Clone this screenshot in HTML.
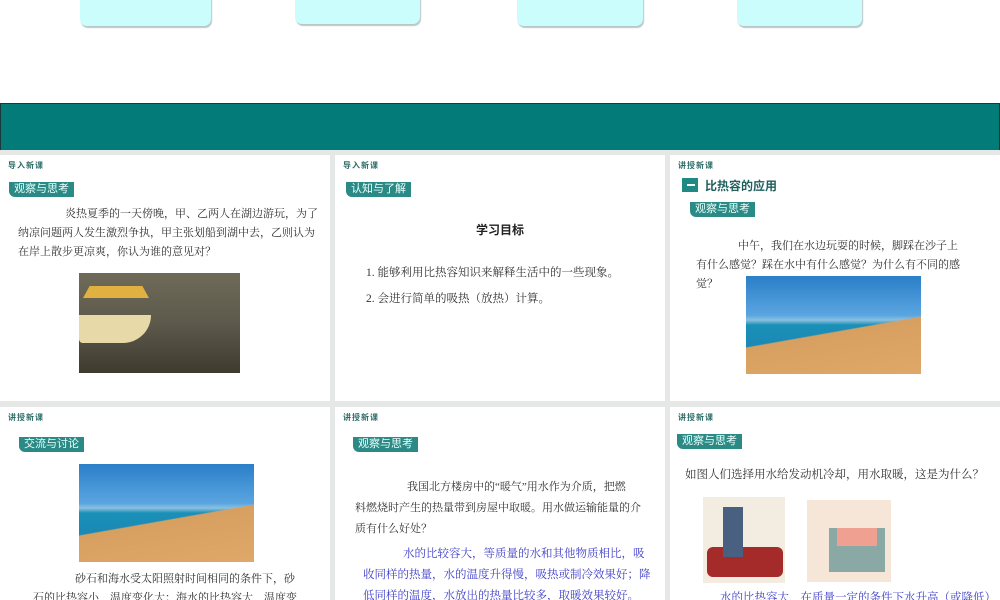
<!DOCTYPE html>
<html><head><meta charset="utf-8"><style>
*{margin:0;padding:0;box-sizing:border-box}
body{width:1000px;height:600px;overflow:hidden;background:#fff;position:relative;font-family:"Liberation Serif","Noto Serif CJK SC",serif;color:#333}
.a{position:absolute}
.card{position:absolute;top:-8px;height:34px;background:#ccfdfd;border-radius:0 0 7px 7px;box-shadow:1px 2px 1px #b8c8c8}
.grey{position:absolute;left:0;top:150px;width:1000px;height:450px;background:#e6e8e8}
.p{position:absolute;background:#fff;overflow:hidden}
.hd{position:absolute;left:8px;top:5px;font:bold 8px "Liberation Sans","Noto Sans CJK SC",sans-serif;color:#2a6b66;letter-spacing:1px}
.tag{position:absolute;height:15px;padding:0 5px;background:#2b8a85;color:#e8fffd;font:11px "Liberation Sans","Noto Sans CJK SC",sans-serif;line-height:15px;border-radius:0 0 0 6px}
.t{position:absolute;font-size:11px;line-height:19px;color:#333;white-space:nowrap}
.img{position:absolute}
.blue{color:#4040c8}
.sea{background:linear-gradient(170deg,transparent 55%,#d8a060 56%,#e0a868) ,linear-gradient(#2a7fc8,#5aa5e0 40%,#8ac0e0 45%,#1a90b8 50%,#1a7fb0)}
</style></head><body>
<div class="card" style="left:80px;width:131px"></div>
<div class="card" style="left:295px;width:125px;height:32px"></div>
<div class="card" style="left:517px;width:126px"></div>
<div class="card" style="left:737px;width:125px"></div>
<div class="a" style="left:0;top:103px;width:1000px;height:48px;background:#037c79;border:1px solid #1a3a3a"></div>
<div class="grey"></div>

<div class="p" style="left:0;top:155px;width:330px;height:246px">
<div class="hd">导入新课</div>
<div class="tag" style="left:9px;top:27px">观察与思考</div>
<div class="t" style="left:18px;top:50px;width:300px;text-indent:47px">炎热夏季的一天傍晚，甲、乙两人在湖边游玩，为了<br>纳凉问题两人发生激烈争执，甲主张划船到湖中去，乙则认为<br>在岸上散步更凉爽，你认为谁的意见对？</div>
<div class="img" style="left:79px;top:118px;width:161px;height:100px;background:linear-gradient(#6f6a58,#5d5a4c 50%,#3e3a2e)">
<div class="a" style="left:4px;top:13px;width:66px;height:12px;background:#e0b040;clip-path:polygon(10% 0,90% 0,100% 100%,0 100%)"></div>
<div class="a" style="left:0;top:42px;width:72px;height:28px;background:#e8d9a8;border-radius:0 0 30px 4px"></div>
</div>
</div>

<div class="p" style="left:335px;top:155px;width:330px;height:246px">
<div class="hd">导入新课</div>
<div class="tag" style="left:11px;top:27px">认知与了解</div>
<div class="a" style="left:0;top:66px;width:330px;text-align:center;font:bold 12px 'Liberation Sans','Noto Sans CJK SC',sans-serif;color:#222">学习目标</div>
<div class="t" style="left:31px;top:109px;font-size:11.5px">1. 能够利用比热容知识来解释生活中的一些现象。</div>
<div class="t" style="left:31px;top:135px;font-size:11.5px">2. 会进行简单的吸热（放热）计算。</div>
</div>

<div class="p" style="left:670px;top:155px;width:330px;height:246px">
<div class="hd">讲授新课</div>
<div class="a" style="left:12px;top:23px;width:16px;height:14px;background:#1f8a84"></div>
<div class="a" style="left:17px;top:29px;width:8px;height:2px;background:#fff"></div>
<div class="a" style="left:35px;top:22px;font:bold 12px 'Liberation Sans','Noto Sans CJK SC',sans-serif;color:#1f5f5c">比热容的应用</div>
<div class="tag" style="left:20px;top:47px">观察与思考</div>
<div class="t" style="left:26px;top:82px;text-indent:42px">中午，我们在水边玩耍的时候，脚踩在沙子上<br>有什么感觉？踩在水中有什么感觉？为什么有不同的感<br>觉？</div>
<div class="img sea" style="left:76px;top:121px;width:175px;height:98px"></div>
</div>

<div class="p" style="left:0;top:407px;width:330px;height:193px">
<div class="hd">讲授新课</div>
<div class="tag" style="left:19px;top:30px">交流与讨论</div>
<div class="img sea" style="left:79px;top:57px;width:175px;height:98px"></div>
<div class="t" style="left:33px;top:163px;text-indent:42px">砂石和海水受太阳照射时间相同的条件下，砂<br>石的比热容小，温度变化大；海水的比热容大，温度变</div>
</div>

<div class="p" style="left:335px;top:407px;width:330px;height:193px">
<div class="hd">讲授新课</div>
<div class="tag" style="left:18px;top:30px">观察与思考</div>
<div class="t" style="left:20px;top:70px;text-indent:52px;line-height:21px">我国北方楼房中的“暖气”用水作为介质，把燃<br>料燃烧时产生的热量带到房屋中取暖。用水做运输能量的介<br>质有什么好处？</div>
<div class="t blue" style="left:28px;top:137px;text-indent:40px;line-height:21px;font-size:11.5px">水的比较容大，等质量的水和其他物质相比，吸<br>收同样的热量，水的温度升得慢，吸热或制冷效果好；降<br>低同样的温度，水放出的热量比较多，取暖效果较好。</div>
</div>

<div class="p" style="left:670px;top:407px;width:330px;height:193px">
<div class="hd">讲授新课</div>
<div class="tag" style="left:7px;top:27px">观察与思考</div>
<div class="t" style="left:15px;top:59px;font-size:11.5px">如图人们选择用水给发动机冷却，用水取暖，这是为什么？</div>
<div class="img" style="left:33px;top:90px;width:82px;height:86px;background:#f3ece0">
<div class="a" style="left:4px;top:50px;width:76px;height:30px;background:#a52a2a;border-radius:6px"></div>
<div class="a" style="left:20px;top:10px;width:20px;height:50px;background:#4a6080"></div></div>
<div class="img" style="left:137px;top:93px;width:84px;height:82px;background:#f6e6d8">
<div class="a" style="left:22px;top:28px;width:56px;height:44px;background:#8aa8a4"></div>
<div class="a" style="left:30px;top:28px;width:40px;height:18px;background:#f0a090"></div></div>
<div class="t blue" style="left:50px;top:182px;font-size:11.5px">水的比热容大，在质量一定的条件下水升高（或降低）</div>
</div>
</body></html>
